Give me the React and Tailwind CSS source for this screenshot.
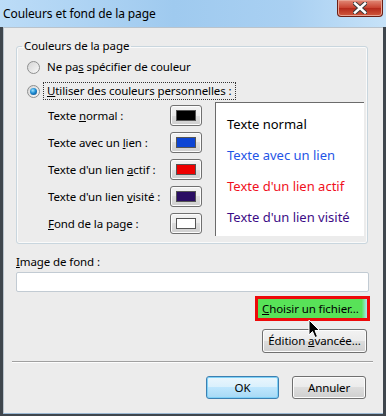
import React from 'react';

const btn =
  'flex items-center justify-center rounded-[3px] border border-[#707070] bg-[linear-gradient(to_bottom,#f2f2f2_0%,#ebebeb_50%,#dddddd_50%,#cfcfcf_100%)] shadow-[inset_0_0_0_1px_#fcfcfc]';

function Radio({ checked }) {
  return (
    <span className="flex h-[13px] w-[13px] shrink-0 items-center justify-center rounded-full border border-[#8e8f8f] bg-[linear-gradient(135deg,#d5d5d5,#f8f8f8)]">
      {checked && (
        <span className="h-[7px] w-[7px] rounded-full bg-[radial-gradient(circle_at_40%_35%,#9de4ff_0%,#1c8bd2_45%,#0a3f7a_100%)]" />
      )}
    </span>
  );
}

function Swatch({ color }) {
  return (
    <div className={`${btn} h-[21px] w-[32px]`}>
      <span className={`h-[11px] w-[20px] border border-[#555] ${color}`} />
    </div>
  );
}

const rows = [
  { label: <>Texte <u>n</u>ormal :</>, color: 'bg-black' },
  { label: <>Texte avec un <u>l</u>ien :</>, color: 'bg-[#0c44d4]' },
  { label: <>Texte d'un lien <u>a</u>ctif :</>, color: 'bg-[#ee0000]' },
  { label: <>Texte d'un lien <u>v</u>isité :</>, color: 'bg-[#2a0d63]' },
  { label: <><u>F</u>ond de la page :</>, color: 'bg-white' },
];

export default function App() {
  return (
    <div className="flex h-[416px] w-[386px] flex-col bg-[#3f464d] font-['Noto_Sans','Open_Sans',sans-serif] text-[11.5px] leading-[16px] tracking-[-0.1px] text-black">
      {/* Title bar */}
      <div className="relative flex h-[27px] shrink-0 items-center bg-[linear-gradient(to_right,#bcdcf7,#9fcaef_45%,#a9d0f2_75%,#c6e2f8)] pl-[3px] text-[12px]">
        Couleurs et fond de la page
        <div className="absolute right-[3px] top-0 flex h-[17px] w-[46px] items-center justify-center rounded-b-[4px] border border-t-0 border-[#6b1f14] bg-[linear-gradient(to_bottom,#e28a78,#c8412f_50%,#b4281a_50%,#cf5a3e)] shadow-[inset_0_0_0_1px_#e8a393]">
          <svg width="14" height="12" viewBox="0 0 14 12">
            <path d="M2 1.5 L12 10.5 M12 1.5 L2 10.5" stroke="#3a3a3a" strokeWidth="4.5" strokeLinecap="square" />
            <path d="M2 1.5 L12 10.5 M12 1.5 L2 10.5" stroke="#ffffff" strokeWidth="2.5" strokeLinecap="square" />
          </svg>
        </div>
      </div>

      {/* Body */}
      <div className="relative mx-[3px] mb-[3px] flex flex-1 flex-col border-l border-t border-[#b9c3cc] bg-[#ececec] shadow-[0_1px_0_#9bb8d3]">
        <fieldset className="ml-[12px] mr-[15px] mt-[10px] rounded-[3px] border border-[#c9d6de] pb-[7px] shadow-[inset_0_0_0_1px_#fafafa]">
          <legend className="ml-[5px] px-[2px]">Couleurs de la page</legend>
          <div className="mt-[4px] flex h-[18px] items-center pl-[10px]">
            <Radio />
            <span className="ml-[3px] border border-transparent px-[3px]">
              Ne pa<u>s</u> spécifier de couleur
            </span>
          </div>
          <div className="mt-[6px] flex h-[18px] items-center pl-[10px]">
            <Radio checked />
            <span className="ml-[3px] border border-dotted border-[#333] px-[3px]">
              <u>U</u>tiliser des couleurs personnelles :
            </span>
          </div>
          <div className="mt-[2px] flex pl-[31px]">
            <div className="flex flex-col gap-[6px] pt-[3px]">
              {rows.map((r, i) => (
                <div key={i} className="flex h-[21px] items-center">
                  <span className="w-[122px]">{r.label}</span>
                  <Swatch color={r.color} />
                </div>
              ))}
            </div>
            <div className="ml-[13px] flex h-[134px] w-[149px] flex-col gap-[15px] border-l border-t border-[#6b6b6b] bg-white pl-[11px] pt-[13px] text-[13px] leading-[16px] tracking-normal">
              <span className="text-black">Texte normal</span>
              <span className="text-[#1f55e6]">Texte avec un lien</span>
              <span className="text-[#f0101c]">Texte d'un lien actif</span>
              <span className="text-[#3c0c86]">Texte d'un lien visité</span>
            </div>
          </div>
        </fieldset>

        <div className="ml-[12px] mt-[10px]">
          <u>I</u>mage de fond :
        </div>
        <div className="ml-[12px] mr-[14px] mt-[2px] h-[20px] rounded-[2px] border border-[#c2cbd3] bg-white" />

        <div className="mr-[13px] mt-[4px] flex justify-end">
          <div className="flex h-[25px] w-[115px] items-center border-[3px] border-[#ee0a0a] bg-[linear-gradient(to_right,#58e258_95%,#a8e6f5)] pl-[4px]">
            <span>
              <u>C</u>hoisir un fichier...
            </span>
          </div>
        </div>

        <div className="mr-[16px] mt-[8px] flex justify-end">
          <div className={`${btn} h-[24px] w-[105px]`}>
            <span>
              Édition <u>a</u>vancée...
            </span>
          </div>
        </div>

        <div className="ml-[8px] mr-[10px] mt-[8px] h-[2px] border-t border-b border-t-[#a0a0a0] border-b-[#fdfdfd]" />

        <div className="mr-[17px] mt-[13px] flex justify-end gap-[13px]">
          <div className="flex h-[23px] w-[73px] items-center justify-center rounded-[3px] border border-[#3c7fb1] bg-[linear-gradient(to_bottom,#eaf6fd_0%,#d9f0fc_50%,#bee6fd_50%,#a7d9f5_100%)] shadow-[inset_0_0_0_1px_#7fd1f6]">
            OK
          </div>
          <div className={`${btn} h-[23px] w-[74px]`}>Annuler</div>
        </div>

        {/* Mouse cursor */}
        <svg className="absolute left-[304px] top-[291px]" width="13" height="20" viewBox="0 0 13 20">
          <path d="M1 1 L1 16 L4.5 12.5 L7 18.5 L9.5 17.5 L7 11.5 L11.5 11.5 Z" fill="#000" stroke="#fff" strokeWidth="1" />
        </svg>
      </div>
    </div>
  );
}
